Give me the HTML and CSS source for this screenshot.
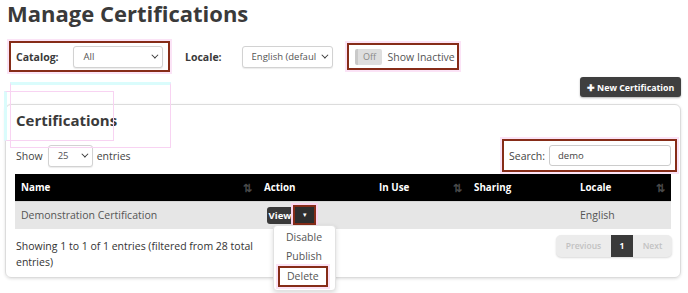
FILE: index.html
```html
<!DOCTYPE html>
<html lang="en">
<head>
  <meta charset="UTF-8">
  <title>Manage Certifications</title>
  <link rel="stylesheet" href="styles.css">
</head>
<body>
  <h1 class="page-title">Manage Certifications</h1>

  <div class="filter-bar">
    <div class="filter marked catalog">
      <label>Catalog:</label>
      <div class="select">All <span class="chev"></span></div>
    </div>
    <div class="filter locale-filter">
      <label>Locale:</label>
      <div class="select locale"><span class="clip">English (default)</span> <span class="chev"></span></div>
    </div>
    <div class="filter marked toggle-wrap">
      <span class="toggle">Off</span>
      <span class="toggle-label">Show Inactive</span>
    </div>
  </div>

  <div class="actions">
    <button class="btn-new"><span class="plus">&#10010;</span> New Certification</button>
  </div>

  <div class="card">
    <div class="ghost ghost-a"></div>
    <div class="ghost ghost-b"></div>
    <h2 class="card-title">Certifications</h2>
    <div class="table-tools">
      <div class="length">Show <div class="select small">25 <span class="chev"></span></div> entries</div>
      <div class="search marked">Search: <div class="search-input">demo</div></div>
    </div>

    <table class="cert-table">
      <thead>
        <tr>
          <th class="c-name">Name <span class="sort">&#8645;</span></th>
          <th class="c-action">Action</th>
          <th class="c-use">In Use <span class="sort">&#8645;</span></th>
          <th class="c-share">Sharing</th>
          <th class="c-locale">Locale <span class="sort">&#8645;</span></th>
        </tr>
      </thead>
      <tbody>
        <tr>
          <td>Demonstration Certification</td>
          <td>
            <div class="btn-group">
              <span class="btn-view">View</span><span class="btn-caret">&#9662;</span>
              <div class="menu">
                <div class="menu-item">Disable</div>
                <div class="menu-item">Publish</div>
                <div class="menu-item marked">Delete</div>
              </div>
            </div>
          </td>
          <td></td>
          <td></td>
          <td>English</td>
        </tr>
      </tbody>
    </table>

    <div class="table-foot">
      <div class="info">Showing 1 to 1 of 1 entries (filtered from 28 total entries)</div>
      <div class="pager">
        <span class="page-link prev">Previous</span>
        <span class="page-link current">1</span>
        <span class="page-link next">Next</span>
      </div>
    </div>
  </div>
</body>
</html>
```

FILE: styles.css
```css
* {
  box-sizing: border-box;
  margin: 0;
  padding: 0;
}
html {
  overflow: hidden;
}
body {
  font-family: 'Open Sans', 'Liberation Sans', sans-serif;
  color: #444;
  background: #fff;
  padding: 0 7px 0 5px;
  min-height: 293px;
  font-size: 10.5px;
}
.page-title {
  font-size: 22px;
  font-weight: bold;
  color: #3a3a3a;
  line-height: 26px;
  margin-left: 2px;
}

/* filters */
.filter-bar {
  display: flex;
  align-items: center;
  margin-top: 15px;
  margin-left: 4px;
}
.filter {
  display: flex;
  align-items: center;
  height: 31px;
  padding: 0 5px;
  border: 2px solid transparent;
}
.filter label {
  font-weight: bold;
  color: #3a3a3a;
  margin-right: 14px;
}
.locale-filter label {
  margin-right: 20px;
}
.marked {
  border: 2px solid #862c18;
  box-shadow: 0 0 0 2px #fbe3f6;
}
.filter.catalog {
  width: 161px;
  margin-right: 8px;
}
.select {
  display: flex;
  align-items: center;
  justify-content: space-between;
  border: 1px solid #d2d2d2;
  border-radius: 3px;
  height: 22px;
  width: 91px;
  padding: 0 6px 0 10px;
  font-size: 9.5px;
  color: #555;
  background: #fff;
  box-shadow: 0 1px 1px rgba(0, 0, 0, 0.08);
}
.select.locale {
  padding-left: 9px;
  white-space: nowrap;
}
.clip {
  overflow: hidden;
  width: 64px;
}
.select.small {
  width: 45px;
  margin: 0 4px 0 5px;
  padding-left: 9px;
}
.chev {
  width: 5px;
  height: 5px;
  border-right: 1.5px solid #333;
  border-bottom: 1.5px solid #333;
  transform: rotate(45deg) translateY(-2px);
  flex: none;
}
.toggle-wrap {
  height: 27px;
  margin-left: 7px;
  padding: 0 2px 0 6px;
}
.toggle {
  display: inline-block;
  width: 27px;
  height: 16px;
  background: #dedede;
  border-left: 3px solid #c9c9c9;
  color: #888;
  font-size: 9px;
  line-height: 16px;
  text-align: center;
  border-radius: 2px;
  margin-right: 6px;
}
.toggle-label {
  color: #555;
}

.actions {
  display: flex;
  justify-content: flex-end;
  margin-top: 5px;
}
.btn-new {
  background: #3f3f3f;
  color: #fff;
  border: none;
  border-radius: 3px;
  font-family: inherit;
  font-weight: bold;
  font-size: 8.8px;
  height: 20px;
  width: 101px;
  box-shadow: 0 1px 2px rgba(0, 0, 0, 0.3);
}
.plus {
  font-size: 9px;
}

/* card */
.card {
  position: relative;
  margin-top: 7px;
  border: 1px solid #dcdcdc;
  border-radius: 6px;
  box-shadow: 0 1px 3px rgba(0, 0, 0, 0.12);
  padding: 5px 9px 7px 9px;
  width: 676px;
}
.ghost {
  position: absolute;
  border: 1px solid #f8d3f2;
  pointer-events: none;
}
.ghost-a {
  left: 4px;
  top: -23px;
  width: 161px;
  height: 66px;
  border-top: 3px solid #dafcfc;
}
.ghost-b {
  left: -2px;
  top: -14px;
  width: 110px;
  height: 50px;
  border-left: 3px solid #dafcfc;
}
.card-title {
  font-size: 15px;
  font-weight: bold;
  color: #3a3a3a;
  line-height: 20px;
  margin-left: 1px;
}
.table-tools {
  display: flex;
  justify-content: space-between;
  align-items: center;
  margin-top: 9px;
}
.length {
  display: flex;
  align-items: center;
  color: #444;
  margin-left: 1px;
}
.search {
  display: flex;
  align-items: center;
  height: 33px;
  width: 175px;
  padding: 0 4px 0 5px;
  margin-right: -6px;
  color: #444;
}
.search-input {
  margin-left: 4px;
  flex: 1;
  height: 21px;
  border: 1px solid #ccc;
  border-radius: 3px;
  padding-left: 8px;
  font-size: 9.5px;
  line-height: 19px;
  color: #444;
}

/* table */
.cert-table {
  width: 656px;
  border-collapse: collapse;
  margin-top: 2px;
}
.cert-table th {
  background: #000;
  color: #fff;
  font-size: 9.8px;
  font-weight: bold;
  text-align: left;
  height: 27px;
  padding: 0 6px;
  position: relative;
}
.sort {
  position: absolute;
  right: 6px;
  top: 6px;
  color: #4a4a4a;
  font-size: 11px;
}
.c-name { width: 243px; }
.c-action { width: 115px; }
.c-use { width: 95px; }
.c-share { width: 106px; }
.cert-table td {
  background: #e6e6e6;
  height: 28px;
  padding: 0 6px;
  color: #555;
  border-top: 1px solid #d6d6d6;
}
.btn-group {
  position: relative;
  display: flex;
  align-items: center;
  margin-left: 3px;
}
.btn-view {
  background: #3a3a3a;
  color: #fff;
  font-weight: bold;
  font-size: 9.5px;
  height: 17px;
  line-height: 17px;
  width: 26px;
  text-align: center;
  border-radius: 3px 0 0 3px;
}
.btn-caret {
  background: #2e2e2e;
  color: #fff;
  font-size: 7px;
  height: 20px;
  width: 23px;
  line-height: 15px;
  text-align: center;
  border: 2px solid #862c18;
  box-shadow: 0 0 0 2px #fbd5ef;
}
.menu {
  position: absolute;
  left: 6px;
  top: 20px;
  width: 63px;
  background: #fff;
  border: 1px solid #e2e2e2;
  border-radius: 4px;
  box-shadow: 0 2px 5px rgba(0, 0, 0, 0.15);
  padding: 2px 0 3px;
  z-index: 5;
}
.menu-item {
  color: #555;
  line-height: 19px;
  padding-left: 12px;
}
.menu-item.marked {
  margin: 0 7px 0 4px;
  padding-left: 7px;
  line-height: 17px;
}

.table-foot {
  display: flex;
  justify-content: space-between;
  align-items: flex-start;
  margin-top: 6px;
}
.info {
  width: 250px;
  line-height: 16px;
  color: #333;
  margin: 3px 0 0 1px;
}
.pager {
  display: flex;
  background: #ececec;
  border-radius: 5px;
  box-shadow: 0 1px 2px rgba(0, 0, 0, 0.15);
  height: 22px;
  margin-right: -1px;
}
.page-link {
  font-size: 8.5px;
  font-weight: 600;
  color: #c2c2c2;
  line-height: 22px;
  text-align: center;
}
.prev { width: 55px; }
.next { width: 39px; }
.page-link.current {
  background: #3a3a3a;
  color: #fff;
  font-weight: bold;
  width: 22px;
}
```
